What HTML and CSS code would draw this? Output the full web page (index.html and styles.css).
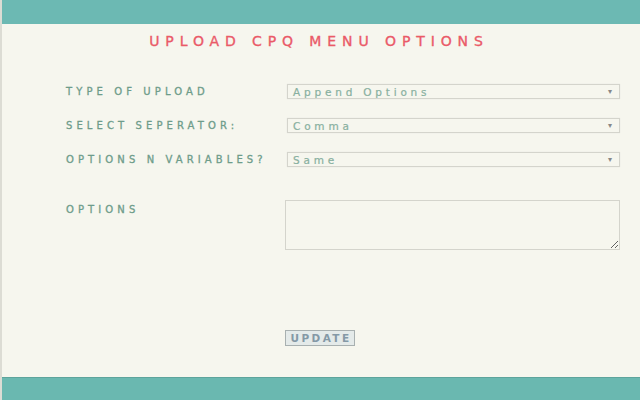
FILE: index.html
```html
<!DOCTYPE html>
<html>
<head>
<meta charset="utf-8">
<link rel="stylesheet" href="styles.css">
</head>
<body>
<div class="page">
  <div class="topbar"></div>
  <main class="panel">
    <h1 class="title">UPLOAD CPQ MENU OPTIONS</h1>
    <div class="form">
      <div class="row">
        <label class="label">TYPE OF UPLOAD</label>
        <div class="select"><span>Append Options</span><span class="arrow">▾</span></div>
      </div>
      <div class="row">
        <label class="label">SELECT SEPERATOR:</label>
        <div class="select"><span>Comma</span><span class="arrow">▾</span></div>
      </div>
      <div class="row">
        <label class="label">OPTIONS N VARIABLES?</label>
        <div class="select"><span>Same</span><span class="arrow">▾</span></div>
      </div>
      <div class="row row-top">
        <label class="label label-top">OPTIONS</label>
        <textarea class="area"></textarea>
      </div>
      <div class="row row-btn">
        <span></span>
        <div><button class="btn">UPDATE</button></div>
      </div>
    </div>
  </main>
  <div class="bottombar"></div>
</div>
</body>
</html>
```

FILE: styles.css
```css
html, body {
  margin: 0;
  padding: 0;
  width: 640px;
  height: 400px;
  overflow: hidden;
  background: #dcdcd4;
}
.page {
  margin-left: 2px;
  height: 400px;
  display: flex;
  flex-direction: column;
  background: #f6f6ee;
  font-family: "DejaVu Sans", sans-serif;
}
.topbar {
  height: 24px;
  background: #6cb9b3;
  flex: none;
}
.panel {
  flex: 1;
  display: flex;
  flex-direction: column;
  background: #f6f6ee;
}
.title {
  margin: 10px 0 0 0;
  padding-right: 4px;
  text-align: center;
  font-size: 14px;
  font-weight: normal;
  letter-spacing: 5.9px;
  color: #ea5a68;
  line-height: 14px;
  -webkit-text-stroke: 0.35px #ea5a68;
}
.form {
  margin-top: 36px;
  padding-left: 64px;
  display: flex;
  flex-direction: column;
}
.row {
  display: grid;
  grid-template-columns: 221px 333px;
  align-items: center;
  height: 15px;
  margin-bottom: 19px;
}
.label {
  font-size: 10px;
  letter-spacing: 4.1px;
  color: #6e9c8a;
  line-height: 10px;
  -webkit-text-stroke: 0.3px #6e9c8a;
  white-space: nowrap;
}
.select {
  height: 15px;
  box-sizing: border-box;
  border: 1px solid #d4d4cc;
  box-shadow: 0 0 1px #e0e0d8;
  background: #f6f6ee;
  display: flex;
  justify-content: space-between;
  align-items: center;
  padding: 0 7px 0 5px;
  font-size: 10.5px;
  letter-spacing: 3.8px;
  color: #88b0a0;
  -webkit-text-stroke: 0.2px #88b0a0;
}
.arrow {
  font-size: 8px;
  color: #888;
  letter-spacing: 0;
  -webkit-text-stroke: 0;
}
.row-top {
  margin-top: 14px;
  height: 50px;
  align-items: start;
  grid-template-columns: 219px 335px;
}
.label-top {
  margin-top: 5px;
}
.area {
  width: 335px;
  height: 50px;
  box-sizing: border-box;
  margin: 0;
  border: 1px solid #d4d4cc;
  background: #f6f6ee;
  resize: both;
}
.row-btn {
  margin-top: 58px;
  height: 16px;
  grid-template-columns: 219px 335px;
}
.btn {
  height: 16px;
  width: 70px;
  margin: 0;
  padding: 0;
  border: 1px solid #a8b0b0;
  background: #e4eae9;
  font-family: "DejaVu Sans", sans-serif;
  font-size: 10.5px;
  font-weight: bold;
  letter-spacing: 2.4px;
  text-indent: 2px;
  color: #8499a6;
}
.bottombar {
  height: 23px;
  flex: none;
  background: #6ab8b0;
  border-top: 1px solid #5ea49c;
  box-sizing: border-box;
}
```
